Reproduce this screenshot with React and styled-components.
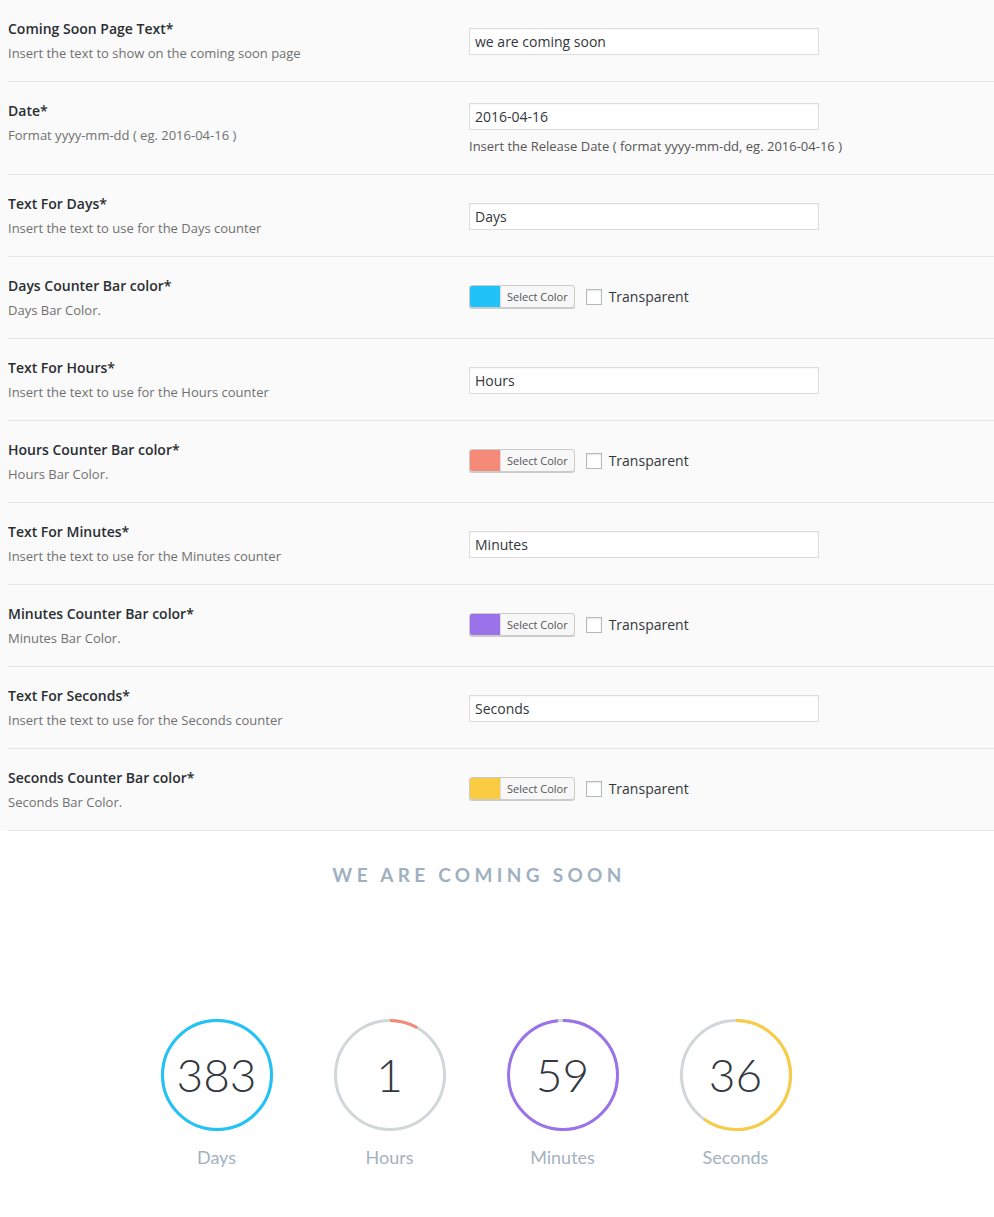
import React from "react";
import styled, { createGlobalStyle } from "styled-components";

const Global = createGlobalStyle`
  html, body { margin: 0; padding: 0; background: #ffffff; }
  body { font-family: "Open Sans", "Liberation Sans", sans-serif; }
  * { box-sizing: border-box; }
`;

const Page = styled.div`
  width: 994px;
  overflow: hidden;
`;

const Form = styled.div`
  background: #fafafa;
  padding-left: 8px;
`;

const Row = styled.div`
  display: grid;
  grid-template-columns: 461px 1fr;
  border-bottom: 1px solid #e5e5e5;
`;

const Label = styled.div`
  padding: 19px 10px 18px 0;
`;

const Title = styled.div`
  font-size: 14px;
  font-weight: 600;
  line-height: 20px;
  color: #2a2e33;
`;

const Desc = styled.div`
  margin-top: 4px;
  font-size: 13px;
  line-height: 20px;
  color: #707070;
`;

const Field = styled.div`
  align-self: center;
  padding: 21px 10px 19px 0;
`;

const TextInput = styled.input`
  display: block;
  width: 350px;
  height: 27px;
  padding: 0 5px;
  border: 1px solid #dddddd;
  box-shadow: inset 0 1px 2px rgba(0, 0, 0, 0.04);
  background: #ffffff;
  font-family: "Open Sans", "Liberation Sans", sans-serif;
  font-size: 14px;
  color: #32373c;
  outline: none;
`;

const Help = styled.div`
  margin-top: 7px;
  font-size: 13px;
  line-height: 18px;
  color: #555;
`;

const ColorLine = styled.div`
  display: flex;
  align-items: center;
  margin-bottom: 4px;
`;

const ColorButton = styled.div`
  display: flex;
  height: 23px;
  border: 1px solid #cccccc;
  border-radius: 3px;
  overflow: hidden;
  background: #f7f7f7;
  box-shadow: 0 1px 0 #cccccc;
`;

const Swatch = styled.span`
  width: 30px;
  background: ${(p) => p.$color};
`;

const ColorText = styled.span`
  display: flex;
  align-items: center;
  padding: 0 6px;
  border-left: 1px solid #dddddd;
  font-size: 11px;
  color: #555;
`;

const Check = styled.span`
  width: 16px;
  height: 16px;
  margin-left: 11px;
  border: 1px solid #b4b9be;
  background: #fff;
  box-shadow: inset 0 1px 2px rgba(0, 0, 0, 0.1);
`;

const CheckText = styled.span`
  margin-left: 7px;
  font-size: 14px;
  color: #32373c;
`;

const Countdown = styled.section`
  width: 952px;
  padding-top: 31px;
  padding-bottom: 47px;
  display: flex;
  flex-direction: column;
  align-items: center;
`;

const Heading = styled.h2`
  margin: 0;
  font-family: Lato, "Liberation Sans", sans-serif;
  font-weight: 700;
  font-size: 19px;
  line-height: 26px;
  letter-spacing: 4.3px;
  padding-left: 6px;
  color: #9fb1c1;
  text-transform: uppercase;
`;

const Dials = styled.div`
  display: flex;
  gap: 61px;
  margin-top: 131px;
`;

const Dial = styled.div`
  display: flex;
  flex-direction: column;
  align-items: center;
  width: 112px;
`;

const Ring = styled.div`
  position: relative;
  width: 112px;
  height: 112px;
  display: flex;
  align-items: center;
  justify-content: center;
`;

const RingSvg = styled.svg`
  position: absolute;
  inset: 0;
`;

const Num = styled.span`
  position: relative;
  font-family: Lato, "Liberation Sans", sans-serif;
  font-weight: 300;
  font-size: 46px;
  color: #333840;
  line-height: 1;
`;

const Unit = styled.span`
  margin-top: 15px;
  font-family: Lato, "Liberation Sans", sans-serif;
  font-size: 18px;
  line-height: 22px;
  color: #a3b2c0;
`;

const fields = [
  { title: "Coming Soon Page Text*", desc: "Insert the text to show on the coming soon page", value: "we are coming soon" },
  { title: "Date*", desc: "Format yyyy-mm-dd ( eg. 2016-04-16 )", value: "2016-04-16", help: "Insert the Release Date ( format yyyy-mm-dd, eg. 2016-04-16 )" },
  { title: "Text For Days*", desc: "Insert the text to use for the Days counter", value: "Days" },
  { title: "Days Counter Bar color*", desc: "Days Bar Color.", color: "#1fc3f7" },
  { title: "Text For Hours*", desc: "Insert the text to use for the Hours counter", value: "Hours" },
  { title: "Hours Counter Bar color*", desc: "Hours Bar Color.", color: "#f58a79" },
  { title: "Text For Minutes*", desc: "Insert the text to use for the Minutes counter", value: "Minutes" },
  { title: "Minutes Counter Bar color*", desc: "Minutes Bar Color.", color: "#9b72ea" },
  { title: "Text For Seconds*", desc: "Insert the text to use for the Seconds counter", value: "Seconds" },
  { title: "Seconds Counter Bar color*", desc: "Seconds Bar Color.", color: "#f9cc42" },
];

const dials = [
  { n: "383", label: "Days", color: "#1fc3f7", frac: 1 },
  { n: "1", label: "Hours", color: "#f58a79", frac: 1 / 12 },
  { n: "59", label: "Minutes", color: "#9b72ea", frac: 59 / 60 },
  { n: "36", label: "Seconds", color: "#f9cc42", frac: 36 / 60 },
];

function DialRing({ color, frac }) {
  const r = 54.5;
  const c = 2 * Math.PI * r;
  return (
    <RingSvg width="112" height="112" viewBox="0 0 112 112">
      <circle cx="56" cy="56" r={r} fill="none" stroke="#d1d6d9" strokeWidth="3" />
      <circle
        cx="56"
        cy="56"
        r={r}
        fill="none"
        stroke={color}
        strokeWidth="3"
        strokeDasharray={`${c * frac} ${c}`}
        transform="rotate(-90 56 56)"
      />
    </RingSvg>
  );
}

export default function App() {
  return (
    <Page>
      <Global />
      <Form>
        {fields.map((f) => (
          <Row key={f.title}>
            <Label>
              <Title>{f.title}</Title>
              <Desc>{f.desc}</Desc>
            </Label>
            <Field>
              {f.color ? (
                <ColorLine>
                  <ColorButton>
                    <Swatch $color={f.color} />
                    <ColorText>Select Color</ColorText>
                  </ColorButton>
                  <Check />
                  <CheckText>Transparent</CheckText>
                </ColorLine>
              ) : (
                <>
                  <TextInput defaultValue={f.value} />
                  {f.help && <Help>{f.help}</Help>}
                </>
              )}
            </Field>
          </Row>
        ))}
      </Form>
      <Countdown>
        <Heading>We are coming soon</Heading>
        <Dials>
          {dials.map((d) => (
            <Dial key={d.label}>
              <Ring>
                <DialRing color={d.color} frac={d.frac} />
                <Num>{d.n}</Num>
              </Ring>
              <Unit>{d.label}</Unit>
            </Dial>
          ))}
        </Dials>
      </Countdown>
    </Page>
  );
}
